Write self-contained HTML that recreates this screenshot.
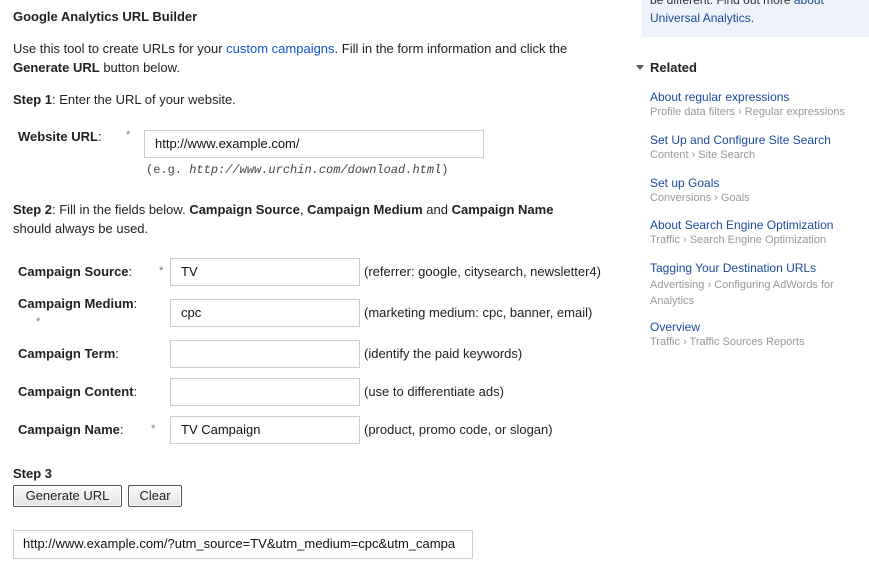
<!DOCTYPE html>
<html><head><meta charset="utf-8"><style>
body{margin:0;width:869px;height:576px;background:#fff;font-family:"Liberation Sans",Arial,sans-serif;font-size:13px;color:#222;position:relative;overflow:hidden}
.a{position:absolute;white-space:nowrap}
.b{font-weight:bold}
.inp{position:absolute;border:1px solid #ccc;background:#fff;box-sizing:border-box;font-size:13px;padding-left:10px;line-height:26px;color:#111}
.btn{position:absolute;border:1px solid #555;border-radius:2px;background:linear-gradient(#fbfbfb,#e3e3e3);box-sizing:border-box;font-size:13px;text-align:center;line-height:19px;box-shadow:inset 0 0 0 1px #fff}
a{color:#15c}
.lk{position:absolute;left:650px;color:#1a4a9c;font-size:12px;white-space:nowrap}
.sb{position:absolute;left:650px;color:#999;font-size:11px;white-space:nowrap}
.st{position:absolute;color:#777;font-size:11px}
</style></head><body>
<div style="position:absolute;left:642px;top:0;width:227px;height:37px;background:#eef3fb"></div>
<div class="a" style="left:650px;top:-7px;font-size:12px;color:#333">be different. Find out more <span style="color:#1a4a9c">about</span></div>
<div class="a" style="left:650px;top:11px;font-size:12px;color:#1a4a9c">Universal Analytics<span style="color:#333">.</span></div>
<div class="a" style="left:636px;top:65px;width:0;height:0;border-left:4px solid transparent;border-right:4px solid transparent;border-top:5px solid #555"></div>
<div class="a b" style="left:650px;top:60px;font-size:13px">Related</div>
<div class="lk" style="top:90px">About regular expressions</div><div class="sb" style="top:106px">Profile data filters › Regular expressions</div>
<div class="lk" style="top:133px">Set Up and Configure Site Search</div><div class="sb" style="top:149px">Content › Site Search</div>
<div class="lk" style="top:176px">Set up Goals</div><div class="sb" style="top:192px">Conversions › Goals</div>
<div class="lk" style="top:218px">About Search Engine Optimization</div><div class="sb" style="top:234px">Traffic › Search Engine Optimization</div>
<div class="lk" style="top:261px">Tagging Your Destination URLs</div><div class="sb" style="top:277px;line-height:16px">Advertising › Configuring AdWords for<br>Analytics</div>
<div class="lk" style="top:320px">Overview</div><div class="sb" style="top:336px">Traffic › Traffic Sources Reports</div>

<div class="a b" style="left:13px;top:9px;font-size:13px">Google Analytics URL Builder</div>
<div class="a" style="left:13px;top:39px;line-height:19px">Use this tool to create URLs for your <a>custom campaigns</a>. Fill in the form information and click the<br><b>Generate URL</b> button below.</div>
<div class="a" style="left:13px;top:92px"><b>Step 1</b>: Enter the URL of your website.</div>
<div class="a" style="left:18px;top:129px"><b>Website URL</b>:</div>
<div class="st" style="left:126px;top:129px">*</div>
<div class="inp" style="left:144px;top:130px;width:340px;height:28px">http://www.example.com/</div>
<div class="a" style="left:146px;top:163px;font-family:'Liberation Mono',monospace;font-size:12px;color:#444">(e.g. <i>http://www.urchin.com/download.html</i>)</div>
<div class="a" style="left:13px;top:200px;line-height:19px"><b>Step 2</b>: Fill in the fields below. <b>Campaign Source</b>, <b>Campaign Medium</b> and <b>Campaign Name</b><br>should always be used.</div>

<div class="a b" style="left:18px;top:264px">Campaign Source<span style="font-weight:normal">:</span></div>
<div class="st" style="left:159px;top:265px">*</div>
<div class="inp" style="left:170px;top:258px;width:190px;height:28px">TV</div>
<div class="a" style="left:364px;top:264px">(referrer: google, citysearch, newsletter4)</div>

<div class="a b" style="left:18px;top:296px">Campaign Medium<span style="font-weight:normal">:</span></div>
<div class="st" style="left:36px;top:316px">*</div>
<div class="inp" style="left:170px;top:299px;width:190px;height:28px">cpc</div>
<div class="a" style="left:364px;top:305px">(marketing medium: cpc, banner, email)</div>

<div class="a b" style="left:18px;top:346px">Campaign Term<span style="font-weight:normal">:</span></div>
<div class="inp" style="left:170px;top:340px;width:190px;height:28px"></div>
<div class="a" style="left:364px;top:346px">(identify the paid keywords)</div>

<div class="a b" style="left:18px;top:384px">Campaign Content<span style="font-weight:normal">:</span></div>
<div class="inp" style="left:170px;top:378px;width:190px;height:28px"></div>
<div class="a" style="left:364px;top:384px">(use to differentiate ads)</div>

<div class="a b" style="left:18px;top:422px">Campaign Name<span style="font-weight:normal">:</span></div>
<div class="st" style="left:151px;top:423px">*</div>
<div class="inp" style="left:170px;top:416px;width:190px;height:28px">TV Campaign</div>
<div class="a" style="left:364px;top:422px">(product, promo code, or slogan)</div>

<div class="a b" style="left:13px;top:466px">Step 3</div>
<div class="btn" style="left:13px;top:485px;width:109px;height:22px">Generate URL</div>
<div class="btn" style="left:128px;top:485px;width:54px;height:22px">Clear</div>
<div class="inp" style="left:13px;top:530px;width:460px;height:29px;padding-left:9px;overflow:hidden;white-space:nowrap">http://www.example.com/?utm_source=TV&amp;utm_medium=cpc&amp;utm_campa</div>
</body></html>
